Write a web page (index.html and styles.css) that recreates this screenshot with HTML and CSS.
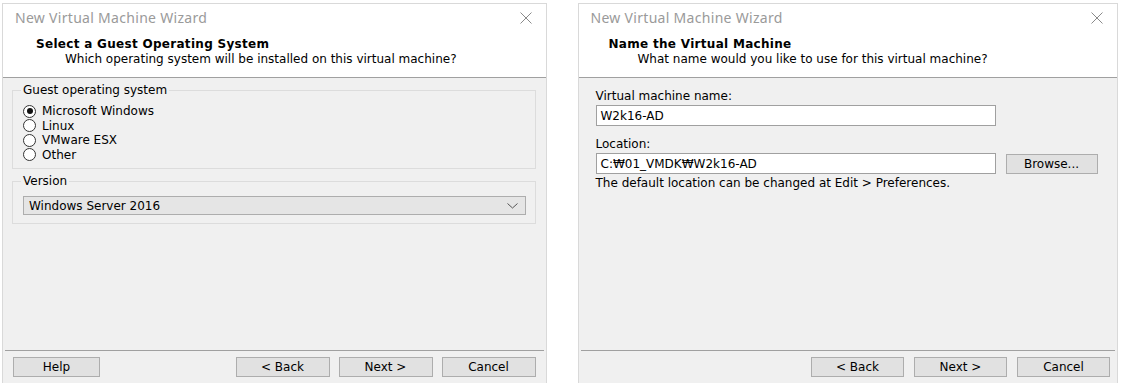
FILE: index.html
```html
<!DOCTYPE html>
<html>
<head>
<meta charset="utf-8">
<link rel="stylesheet" href="styles.css">
</head>
<body>
<div class="screen">
  <div class="window win-left">
    <div class="titlebar">
      <span class="title">New Virtual Machine Wizard</span>
      <svg class="close" width="12" height="12" viewBox="0 0 12 12"><path d="M0.5 0.5 L11.5 11.5 M11.5 0.5 L0.5 11.5" stroke="#8a8a8a" stroke-width="1" fill="none"/></svg>
    </div>
    <div class="header">
      <div class="h-title">Select a Guest Operating System</div>
      <div class="h-sub">Which operating system will be installed on this virtual machine?</div>
    </div>
    <div class="body body-left">
      <fieldset class="group group-os">
        <legend>Guest operating system</legend>
        <div class="radio-row"><span class="radio checked"></span>Microsoft Windows</div>
        <div class="radio-row"><span class="radio"></span>Linux</div>
        <div class="radio-row"><span class="radio"></span>VMware ESX</div>
        <div class="radio-row"><span class="radio"></span>Other</div>
      </fieldset>
      <fieldset class="group group-ver">
        <legend>Version</legend>
        <div class="combo">
          <span>Windows Server 2016</span>
          <svg width="11" height="6" viewBox="0 0 11 6"><path d="M0.5 0.5 L5.5 5 L10.5 0.5" stroke="#555" stroke-width="1" fill="none"/></svg>
        </div>
      </fieldset>
    </div>
    <div class="footer footer-left">
      <button class="btn btn-help">Help</button>
      <div class="spacer"></div>
      <button class="btn">&lt; Back</button>
      <button class="btn">Next &gt;</button>
      <button class="btn">Cancel</button>
    </div>
  </div>

  <div class="window win-right">
    <div class="titlebar">
      <span class="title">New Virtual Machine Wizard</span>
      <svg class="close" width="12" height="12" viewBox="0 0 12 12"><path d="M0.5 0.5 L11.5 11.5 M11.5 0.5 L0.5 11.5" stroke="#8a8a8a" stroke-width="1" fill="none"/></svg>
    </div>
    <div class="header header-right">
      <div class="h-title">Name the Virtual Machine</div>
      <div class="h-sub">What name would you like to use for this virtual machine?</div>
    </div>
    <div class="body body-right">
      <div class="label">Virtual machine name:</div>
      <div class="input">W2k16-AD</div>
      <div class="label label-loc">Location:</div>
      <div class="loc-row">
        <div class="input">C:₩01_VMDK₩W2k16-AD</div>
        <button class="btn btn-browse">Browse...</button>
      </div>
      <div class="note">The default location can be changed at Edit &gt; Preferences.</div>
    </div>
    <div class="footer footer-right">
      <div class="spacer"></div>
      <button class="btn">&lt; Back</button>
      <button class="btn">Next &gt;</button>
      <button class="btn">Cancel</button>
    </div>
  </div>
</div>
</body>
</html>
```
FILE: styles.css
```css
* { box-sizing: border-box; }
html, body {
  margin: 0;
  padding: 0;
  background: #ffffff;
  overflow: hidden;
}
body {
  font-family: "DejaVu Sans", "Liberation Sans", sans-serif;
  font-size: 12px;
  color: #000;
  width: 1121px;
  height: 383px;
}
.screen {
  display: flex;
  padding: 3px 3px 0 2px;
  height: 383px;
}
.window {
  display: flex;
  flex-direction: column;
  background: #f0f0f0;
  border: 1px solid #d9d9d9;
  border-bottom: none;
  height: 385px;
}
.win-left { width: 545px; }
.win-right { width: 541px; margin-left: 31px; }

.titlebar {
  height: 30px;
  background: #fff;
  display: flex;
  align-items: center;
  justify-content: space-between;
  padding: 0 14px 0 12px;
}
.title {
  font-family: "Noto Sans", "Open Sans", sans-serif;
  font-size: 14px;
  letter-spacing: 0.3px;
  color: #9a9a9a;
  padding-bottom: 3px;
}
.close { display: block; margin-bottom: 2px; }

.header {
  background: #fff;
  padding: 3px 0 10px 33px;
  border-bottom: 1px solid #a0a0a0;
  height: 30px;
  box-sizing: content-box;
}
.header-right { padding-left: 30px; }
.h-title {
  font-weight: bold;
  letter-spacing: 0.3px;
  line-height: 15px;
  height: 15px;
}
.h-sub {
  padding-left: 29px;
  line-height: 15px;
}

.body {
  flex: 1;
}
.body-left { padding: 6px 10px 0 9px; }

.group {
  margin: 0;
  border: 1px solid #dcdcdc;
  padding: 0 9px 0 10px;
}
.group legend {
  padding: 0 2px;
  margin-left: -2px;
  line-height: 13px;
  color: #000;
}
.group-os { height: 85px; padding-top: 7px; }
.radio-row {
  display: flex;
  align-items: center;
  height: 14.5px;
}
.radio {
  width: 13px;
  height: 13px;
  border: 1px solid #333;
  border-radius: 50%;
  background: #fff;
  margin-right: 6px;
  position: relative;
  flex: none;
}
.radio.checked::after {
  content: "";
  position: absolute;
  left: 2.5px;
  top: 2.5px;
  width: 6px;
  height: 6px;
  border-radius: 50%;
  background: #111;
}
.group-ver {
  margin-top: 6px;
  height: 49px;
  padding-top: 8px;
}
.combo {
  height: 19px;
  border: 1px solid #adadad;
  background: #e5e5e5;
  display: flex;
  align-items: center;
  justify-content: space-between;
  padding: 0 7px 0 5px;
}

.footer {
  border-top: 1px solid #a0a0a0;
  margin: 0 2px;
  display: flex;
  align-items: flex-start;
  gap: 9px;
  height: 38px;
  padding-top: 6px;
}
.footer-left { padding-left: 8px; padding-right: 8px; }
.footer-right { padding-right: 5px; gap: 10px; }
.spacer { flex: 1; }
.btn {
  font-family: "DejaVu Sans", "Liberation Sans", sans-serif;
  font-size: 12px;
  color: #000;
  width: 94px;
  height: 20px;
  background: #e1e1e1;
  border: 1px solid #adadad;
  padding: 0;
  margin: 0;
}
.footer-right .btn { width: 93px; }
.btn-help { width: 87px; }

.body-right { padding: 11px 0 0 17px; }
.label { line-height: 14px; }
.input {
  margin-top: 2px;
  width: 400px;
  height: 21px;
  background: #fff;
  border: 1px solid #a0a0a0;
  padding: 0 4px;
  display: flex;
  align-items: center;
}
.label-loc { margin-top: 11px; }
.loc-row {
  display: flex;
  align-items: center;
  gap: 10px;
}
.btn-browse { width: 92px; margin-top: 2px; }
.note { margin-top: 2px; line-height: 14px; }
```
